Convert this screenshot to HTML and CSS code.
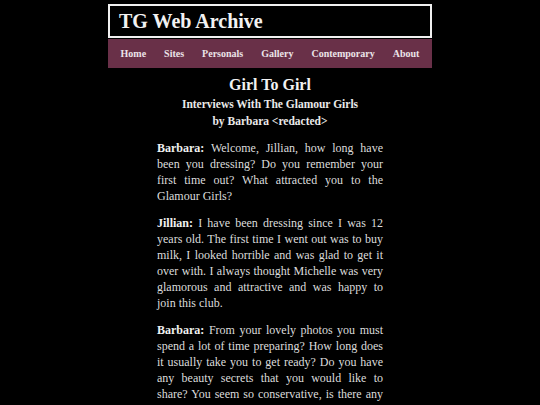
FILE: index.html
```html
<!DOCTYPE html>
<html>
<head>
<meta charset="utf-8">
<title>TG Web Archive</title>
<link rel="stylesheet" href="styles.css">
</head>
<body>
<div class="site">
  <header class="masthead">
    <div class="site-title">TG Web Archive</div>
  </header>
  <nav class="menu">
    <a href="#">Home</a>
    <a href="#">Sites</a>
    <a href="#">Personals</a>
    <a href="#">Gallery</a>
    <a href="#">Contemporary</a>
    <a href="#">About</a>
  </nav>
</div>
<main class="article">
  <h1 class="title">Girl To Girl</h1>
  <h2 class="subtitle">Interviews With The Glamour Girls</h2>
  <h2 class="byline">by Barbara &lt;redacted&gt;</h2>
  <p><b>Barbara:</b> Welcome, Jillian, how long have been you dressing? Do you remember your first time out? What attracted you to the Glamour Girls?</p>
  <p><b>Jillian:</b> I have been dressing since I was 12 years old. The first time I went out was to buy milk, I looked horrible and was glad to get it over with. I always thought Michelle was very glamorous and attractive and was happy to join this club.</p>
  <p><b>Barbara:</b> From your lovely photos you must spend a lot of time preparing? How long does it usually take you to get ready? Do you have any beauty secrets that you would like to share? You seem so conservative, is there any flamboyant side to you?</p>
</main>
</body>
</html>
```
FILE: styles.css
```css
html, body {
  margin: 0;
  padding: 0;
  background: #000;
}
body {
  font-family: "Liberation Serif", "Times New Roman", serif;
  color: #dcdcdc;
  padding-top: 4px;
}
.site {
  width: 324px;
  margin: 0 auto;
}
.masthead {
  box-sizing: border-box;
  height: 34px;
  border: 2px solid #f0f0f0;
  background: #000;
  display: flex;
  align-items: center;
  padding-left: 9px;
}
.site-title {
  font-size: 20px;
  font-weight: bold;
  color: #f2f2f2;
  line-height: 1;
}
.menu {
  margin-top: 1px;
  height: 29px;
  background: #693048;
  display: flex;
  align-items: center;
  justify-content: center;
  gap: 18px;
}
.menu a {
  color: #ece4e8;
  text-decoration: none;
  font-weight: bold;
  font-size: 10px;
}
.article {
  width: 226px;
  margin: 0 auto;
  padding-top: 6px;
}
.title {
  margin: 0;
  text-align: center;
  font-size: 16px;
  line-height: 22px;
  color: #f2f2f2;
}
.subtitle, .byline {
  margin: 0;
  text-align: center;
  font-size: 11.5px;
  line-height: 17px;
  color: #eaeaea;
}
.article p {
  margin: 11px 0 0;
  font-size: 12px;
  line-height: 16px;
  text-align: justify;
}
.byline + p {
  margin-top: 10px;
}
.article b {
  color: #f0f0f0;
}
```
